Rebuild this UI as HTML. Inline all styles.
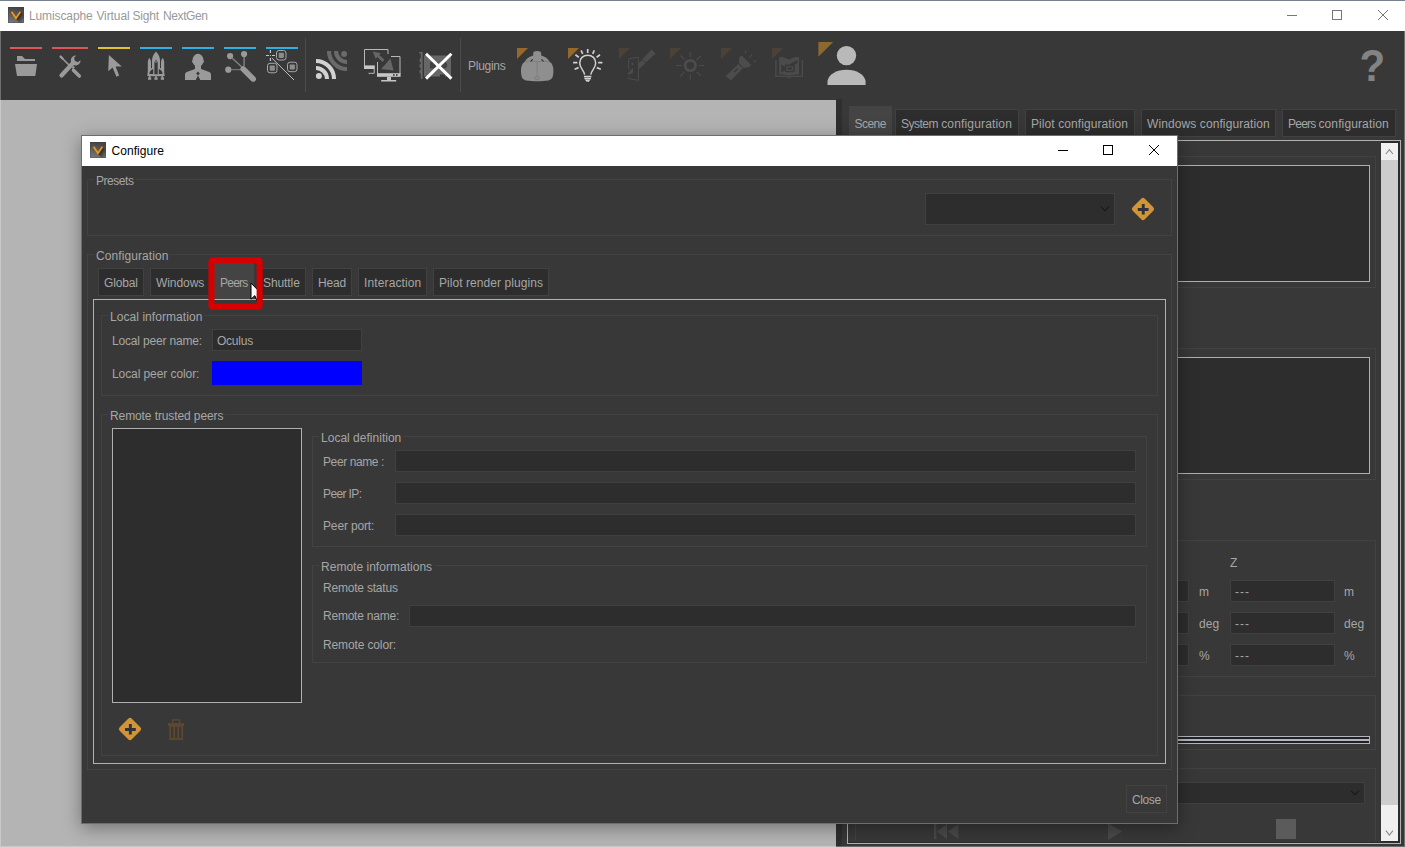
<!DOCTYPE html>
<html><head><meta charset="utf-8"><title>Lumiscaphe Virtual Sight NextGen</title>
<style>
*{box-sizing:border-box;margin:0;padding:0}
html,body{width:1405px;height:847px;overflow:hidden;background:#383838}
body{position:relative;font-family:"Liberation Sans",sans-serif;font-size:12px;line-height:14px;color:#a6a6a6}
.a{position:absolute}
.t{position:absolute;white-space:nowrap;height:14px;line-height:14px}
.gb{position:absolute;border:1px solid #424242}
.in{position:absolute;background:#2d2d2d;border:1px solid #404040}
.tab{position:absolute;background:#2d2d2d;border:1px solid #414141}
.lst{position:absolute;background:#2d2d2d;border:1px solid #b0b0b0}
.ln{position:absolute;height:3px}
svg{position:absolute;overflow:visible}
</style></head><body>
<!-- MAIN WINDOW TITLE -->
<div class="a" style="left:0;top:0;width:1405px;height:31px;background:#fff"></div>
<div class="a" style="left:0;top:0;width:1405px;height:1px;background:#76808f"></div>
<div class="t" id="w0" style="left:29px;top:9px;color:#999;letter-spacing:-0.112px">Lumiscaphe</div><div class="t" id="w1" style="left:96.4px;top:9px;color:#999;letter-spacing:-0.085px">Virtual</div><div class="t" id="w2" style="left:132.6px;top:9px;color:#999;letter-spacing:-0.232px">Sight</div><div class="t" id="w3" style="left:163px;top:9px;color:#999;letter-spacing:-0.394px">NextGen</div>
<!--TITLEICONS-->
<!-- TOOLBAR -->
<div class="a" style="left:0;top:31px;width:1405px;height:69px;background:#383838"></div>
<!--TB_START--><svg class="a" style="left:0;top:0" width="1405" height="100" viewBox="0 0 1405 100">
<!-- title icon -->
<defs><linearGradient id="ig" x1="0.2" y1="0" x2="0" y2="1"><stop offset="0" stop-color="#454545"/><stop offset="1" stop-color="#7a7a7a"/></linearGradient><linearGradient id="ih" x1="0" y1="0" x2="1" y2="1"><stop offset="0" stop-color="#1c1c1c"/><stop offset="0.45" stop-color="#333"/><stop offset="1" stop-color="#808080"/></linearGradient></defs>
<rect x="8" y="7" width="16" height="16" fill="url(#ig)"/>
<polygon points="15.6,18.6 20.6,11.6 24,15 24,23 20,23" fill="url(#ih)"/>
<rect x="8.5" y="7.5" width="15" height="15" fill="none" stroke="#3a3a3a" stroke-opacity="0.3" stroke-width="1"/>
<polyline points="11.6,11.7 16,18.3 20.4,11.7" fill="none" stroke="#f7960f" stroke-width="1.7" stroke-linejoin="miter"/>
<!-- window controls -->
<g stroke="#777" stroke-width="1" fill="none">
<line x1="1287" y1="15.5" x2="1297" y2="15.5"/>
<rect x="1332.5" y="10.5" width="9" height="9"/>
<path d="M1378,10 L1388,20 M1388,10 L1378,20"/>
</g>
<!-- colour bars -->
<rect x="10" y="47" width="32" height="2" fill="#e05656"/>
<rect x="52" y="47" width="36" height="2" fill="#e05656"/>
<rect x="98" y="47" width="32" height="2" fill="#e0c232"/>
<rect x="140" y="47" width="32" height="2" fill="#2eb1e2"/>
<rect x="182" y="47" width="32" height="2" fill="#2eb1e2"/>
<rect x="224" y="47" width="32" height="2" fill="#2eb1e2"/>
<rect x="266" y="47" width="32" height="2" fill="#2eb1e2"/>
<!-- separators -->
<rect x="305" y="38" width="1" height="54" fill="#4b4b4b"/>
<rect x="460" y="38" width="1" height="54" fill="#4b4b4b"/>
<!-- folder -->
<g fill="#9a9a9a">
<path d="M17,56 H22 L25,59 H35 V61 H17Z"/>
<path d="M15,64 H37 L35.3,76 H17Z"/>
</g>
<!-- wrench + screwdriver -->
<g stroke="#9a9a9a" fill="none" stroke-linecap="round">
<line x1="61.5" y1="75.5" x2="73" y2="63" stroke-width="4.2"/>
<line x1="61" y1="57" x2="70" y2="66" stroke-width="1.6"/>
<line x1="60.6" y1="56.6" x2="62.5" y2="58.5" stroke-width="2.4"/>
<line x1="73.5" y1="70.3" x2="79.3" y2="76" stroke-width="3.6"/>
</g>
<path d="M76.2,55.6 A4.9,4.9 0 1 0 80.6,60.2 L77.6,62.2 L74.6,60.6 L74.2,57.4Z" fill="#9a9a9a"/>
<path d="M71.5,67.5 l2.2,-1.6 l1.2,1.2 l-1.6,2.2z" fill="#9a9a9a"/>
<!-- cursor -->
<path d="M108.9,55 L108.2,71.2 L112.6,67.6 L116.4,76.8 L119.2,75.6 L115.6,66.6 L121.8,66.4Z" fill="#9a9a9a"/>
<!-- shuttle -->
<g fill="#9a9a9a">
<path d="M156,51.6 C153.2,54.5 152,57.5 152,61 V75 H160 V61 C160,57.5 158.8,54.5 156,51.6Z"/>
<path d="M149.4,58 C148.2,59.5 147.8,60.8 147.8,62.5 V75.5 H151 V62.5 C151,60.8 150.6,59.5 149.4,58Z"/>
<path d="M162.6,58 C161.4,59.5 161,60.8 161,62.5 V75.5 H164.2 V62.5 C164.2,60.8 163.8,59.5 162.6,58Z"/>
<path d="M147.6,75 C147.6,71 150,68.6 153,67.6 V76 H147.6Z M164.4,75 C164.4,71 162,68.6 159,67.6 V76 H164.4Z"/>
<rect x="147.6" y="74.6" width="16.8" height="1.6"/>
<rect x="148" y="77.4" width="3.2" height="2.4"/><rect x="154.4" y="77.4" width="3.2" height="2.4"/><rect x="160.8" y="77.4" width="3.2" height="2.4"/>
<rect x="149" y="76" width="1.4" height="2"/><rect x="155.3" y="76" width="1.4" height="2"/><rect x="161.6" y="76" width="1.4" height="2"/>
</g>
<path d="M154.4,74.2 V62.6 L156,59.6 L157.7,62.6 V74.2Z" fill="#383838"/>
<path d="M154.9,62.4 L156,60.8 L157.1,62.4Z" fill="#9a9a9a"/>
<path d="M149.4,74 C149.6,71.4 151,69.8 153.2,69 V74Z M162.6,74 C162.4,71.4 161,69.8 158.8,69 V74Z" fill="#383838"/>
<!-- person -->
<g fill="#9a9a9a">
<ellipse cx="198" cy="60.4" rx="5.5" ry="6.6"/>
<ellipse cx="198" cy="61.5" rx="6.2" ry="1.8"/>
<rect x="195" y="64" width="6" height="7"/>
<path d="M185,80 V74.5 C185,72.8 186,72.2 187.4,71.7 L195,69 H201 L208.6,71.7 C210,72.2 211,72.8 211,74.5 V80Z"/>
</g>
<path d="M198,71.4 L199.8,73.6 L198,75.6 L196.2,73.6Z M198,75.4 L200.4,80.2 H195.6Z" fill="#383838"/>
<!-- wand -->
<g fill="#9a9a9a"><circle cx="230.1" cy="56.1" r="3.1"/><circle cx="244.1" cy="54.1" r="3.1"/><circle cx="228.3" cy="69.7" r="3.1"/></g>
<g stroke="#808080" fill="none"><line x1="231.5" y1="57.5" x2="241.6" y2="66.8" stroke-width="1.5"/><line x1="244.1" y1="57" x2="244.1" y2="66" stroke-width="1.5"/><line x1="231" y1="69.7" x2="241" y2="69.7" stroke-width="1"/></g>
<line x1="243.2" y1="68.9" x2="253.2" y2="78.9" stroke="#9a9a9a" stroke-width="5.6" stroke-linecap="round"/>
<!-- selection -->
<g stroke="#c4c4c4" stroke-width="1.2" fill="none">
<path d="M266,55.5 H269 M272,55.5 H275 M270.4,50 V53 M270.4,58 V61" />
</g>
<rect x="269.9" y="55" width="1" height="1" fill="#c4c4c4"/>
<g stroke="#a8a8a8" stroke-width="1" fill="none">
<rect x="276.5" y="50.5" width="9.5" height="9.5" rx="2.5"/>
<rect x="267.5" y="63.3" width="9.5" height="9.5" rx="2.5"/>
<rect x="287.5" y="62.2" width="9.5" height="9.5" rx="2.5"/>
</g>
<g fill="#8c8c8c"><rect x="278.7" y="52.7" width="5.2" height="5.2" rx="0.8"/><rect x="269.7" y="65.5" width="5.2" height="5.2" rx="0.8"/><rect x="289.7" y="64.4" width="5.2" height="5.2" rx="0.8"/></g>
<line x1="271.8" y1="58" x2="294" y2="80" stroke="#d0d0d0" stroke-width="0.9"/>
<!-- rss -->
<g fill="none" stroke="#d2d2d2" stroke-width="4.1">
<path d="M316,68 A11,11 0 0 1 327,79"/><path d="M316,61 A18,18 0 0 1 334,79"/>
</g>
<circle cx="318.9" cy="76.1" r="3" fill="#d2d2d2"/>
<g fill="none" stroke="#6a6a6a" stroke-width="4.1">
<path d="M347,62 A11,11 0 0 1 336,51"/><path d="M347,69 A18,18 0 0 1 329,51"/>
</g>
<circle cx="344.1" cy="53.9" r="3" fill="#6a6a6a"/>
<!-- monitors -->
<g fill="none" stroke="#b8b8b8" stroke-width="1">
<path d="M364.5,66 V49.5 H388 V54"/>
<path d="M377.5,62 V74 M391,56.5 H400 V74"/>
<path d="M374.2,69 V73.3 H368.5"/>
</g>
<g fill="#c6c6c6"><rect x="364" y="65.4" width="10.8" height="3.6"/><rect x="377" y="73.2" width="23.6" height="3.6"/><rect x="387" y="76.8" width="4" height="3.4"/><rect x="381.2" y="80" width="15" height="1.5"/></g>
<g fill="#383838"><rect x="393" y="74.2" width="1.6" height="1.6"/><rect x="396" y="74.2" width="1.6" height="1.6"/></g>
<g fill="#666">
<path d="M372.8,51.4 L381,53.2 L379.2,55 L384.5,59.8 L382.4,62 L377.4,57 L375.6,58.8Z"/>
<path d="M381.2,69 L390.4,58.6 L393.6,70.6Z"/>
</g>
<!-- card + X -->
<g fill="#666">
<path d="M419.2,52 H422.6 V79 H420.8 V53.6 H419.2Z"/>
<path d="M419.6,58.6 h2 v3.4 h-2z M419.6,64.2 h2 v3.6 h-2z M419.6,70 h2 v3.4 h-2z"/>
<path d="M424,55.4 H451 V76.6 H445 V74.6 H440 V76.6 H424Z"/>
</g>
<g fill="#383838" opacity="0.75"><rect x="430" y="62" width="8" height="6.5"/><circle cx="444" cy="65.2" r="3.2"/></g>
<g stroke="#fff" stroke-width="3" fill="none"><line x1="426" y1="53.8" x2="451.4" y2="78.6"/><line x1="451.4" y1="53.8" x2="426" y2="78.6"/></g>
<!-- plugin triangles -->
<g fill="#96692a"><polygon points="517,48 528,48 517,59"/><polygon points="568,48 579,48 568,59"/></g>
<g fill="#4b4136"><polygon points="619,48 630,48 619,59"/><polygon points="670,48 681,48 670,59"/><polygon points="721,48 732,48 721,59"/><polygon points="772,48 783,48 772,59"/></g>
<polygon points="818.4,42 833.2,42 818.4,56.8" fill="#8b6931"/>
<!-- vr headset -->
<path d="M533.2,53.4 C533.2,51.6 534.6,50.9 537.1,50.9 C539.6,50.9 541.2,51.6 541.2,53.4 V55.4 C544.8,56.4 548.2,58.6 549.4,61.4 C552.6,63.6 553.6,67 553.4,71.6 C553.2,76.6 552.4,79.4 548.6,80.4 C542,81.4 532.4,81.4 525.8,80.4 C522,79.4 521.2,76.6 521,71.6 C520.8,67 521.8,63.6 525,61.4 C526.2,58.6 529.6,56.4 533.2,55.4Z" fill="#8f8f8f"/>
<g fill="none" stroke="#7a7a7a" stroke-width="0.8"><path d="M526,62 C530,60.2 533,61.6 534,61.6 H540.4 C541.4,61.6 544.4,60.2 548.4,62"/><path d="M537.1,62 V76.6"/><ellipse cx="537.1" cy="78" rx="2.6" ry="1.4"/></g>
<path d="M530.6,61.4 l2.2,-2 M543.6,61.4 l-2.2,-2" stroke="#333" stroke-width="1.2"/>
<!-- bulb -->
<g fill="none" stroke="#d0d0d0" stroke-width="1.5" stroke-linecap="butt">
<path d="M584.6,74.6 C584,70.4 579.7,68 579.7,62.9 C579.7,58.4 583.2,55.2 587.7,55.2 C592.2,55.2 595.7,58.4 595.7,62.9 C595.7,68 591.4,70.4 590.8,74.6"/>
<path d="M584,76.4 H591.4 M584.4,78.6 H591"/>
</g>
<path d="M584.8,79.6 H590.6 L588.8,81.8 H586.6Z" fill="#d0d0d0"/>
<g stroke="#d0d0d0" stroke-width="1.7" fill="none">
<path d="M587.7,48.9 V52.9 M573.1,62.7 H577.4 M598.2,62.7 H602.4"/>
<path d="M581.1,50.3 L582.7,53.9 M594.3,50.3 L592.7,53.9 M575.4,54.8 L578.8,57.2 M600,54.8 L596.6,57.2 M574.6,69.2 L578.6,67.6 M600.8,69.2 L596.8,67.6"/>
</g>
<!-- door / brush (dim) -->
<g fill="none" stroke="#4c4c4c" stroke-width="1"><path d="M628.7,69.5 V58.8 L638.4,57.2 V80.4 L628.7,78.6 V76.4"/></g>
<g fill="#4c4c4c">
<rect x="631.6" y="62.6" width="1.6" height="2.6"/>
<path d="M627.2,74 L633,67.8 V72.6 L630,74.4Z"/>
<path d="M639,62.8 L642.6,60 L645.4,63.2 L639,69.2Z"/>
<path d="M642.4,59.2 L651.6,49.6 L655.6,53.4 L645.8,62.6Z"/>
</g>
<!-- sun (dim) -->
<circle cx="690.3" cy="65.5" r="5.2" fill="none" stroke="#4c4c4c" stroke-width="2.8"/>
<g stroke="#4c4c4c" stroke-width="1.1" fill="none">
<path d="M690.3,52 V57 M690.3,74.5 V79.6 M676,65.5 H681.8 M698.8,65.5 H704.4"/>
<path d="M680.2,55.4 L684.4,59.4 M700.6,56.2 L696.4,60 M680.2,76.4 L684.2,72.4 M700.8,75.6 L696.6,72"/>
</g>
<!-- flashlight (dim) -->
<g fill="#4c4c4c">
<path d="M725.7,76.2 L738.3,64 L743,68.2 L730.8,80.6Z"/>
<path d="M739.3,57.2 L741.4,55.2 L751.2,64.8 L749.6,67 L743.8,67.9 L738.8,63Z"/>
<path d="M744.4,53.2 L745.6,50.2 L746.4,50.6 L745.8,53.4Z M748.8,57.4 L751.4,54.2 L752.6,54.6 L750,57.8Z M753.2,61.6 L756,60 L756.6,61 L754,62.2Z"/>
</g>
<path d="M734.3,72 L737.6,68.7" stroke="#383838" stroke-width="1.4"/>
<!-- book (dim) -->
<g fill="none" stroke="#4b4b4b" stroke-width="1.4"><path d="M775.9,60 V76.4 H786.6 C788,76.4 788.6,77.6 789.2,77.6 C789.8,77.6 790.4,76.4 791.8,76.4 H802.4 V60"/></g>
<path d="M779.1,57 C783,56.6 786.6,57.6 789.2,59.8 C791.8,57.6 795.4,56.6 799,57 V74.6 C795.4,74.2 791.8,74.6 789.2,76 C786.6,74.6 783,74.2 779.1,74.6Z" fill="#4b4b4b"/>
<g fill="#383838"><path d="M781.2,64.4 L784.6,66.6 V70.4 L781.2,72.6Z"/><rect x="784.6" y="64.6" width="10.2" height="7.6" rx="1.6"/><path d="M789,64.6 L797,60.2 L797.8,62.8 L794,65Z"/></g>
<rect x="786.8" y="66.8" width="5.8" height="3.4" fill="none" stroke="#4b4b4b" stroke-width="1.2"/>
<!-- big person -->
<circle cx="846.5" cy="55.6" r="9.7" fill="#b9b9b9"/>
<path d="M827.5,85 V81 C828.6,74.4 836.4,69.7 846.5,69.7 C856.6,69.7 864.4,74.4 865.6,81 V85Z" fill="#b9b9b9"/>
</svg>
<div class="t" id="plg" style="left:468px;top:59px;color:#a6a6a6;letter-spacing:-0.266px">Plugins</div>
<div class="a" id="q" style="left:1359px;top:42px;width:26px;height:48px;line-height:48px;font-size:44px;font-weight:bold;color:#838383;text-align:center;transform:scaleX(0.955)">?</div>
<!--TB_END-->
<!-- CANVAS -->
<div class="a" style="left:0;top:100px;width:836px;height:747px;background:#b4b4b4"></div>
<div class="a" style="left:836px;top:99px;width:6px;height:748px;background:#2f2f2f"></div>
<!--RP_START--><!-- right panel tabs -->
<div class="a" style="left:849px;top:106px;width:43px;height:34px;background:#444"></div>
<div class="t" id="rt0" style="left:854.5px;top:117px;letter-spacing:-0.526px">Scene</div>
<div class="tab" style="left:895px;top:109px;width:124px;height:28px"></div>
<div class="t" id="rt1a" style="left:901px;top:117px;letter-spacing:-0.503px">System</div><div class="t" id="rt1b" style="left:941.2px;top:117px;letter-spacing:0.160px">configuration</div>
<div class="tab" style="left:1025px;top:109px;width:110px;height:28px"></div>
<div class="t" id="rt2" style="left:1031px;top:117px;letter-spacing:0.085px">Pilot configuration</div>
<div class="tab" style="left:1141px;top:109px;width:135px;height:28px"></div>
<div class="t" id="rt3" style="left:1147px;top:117px;letter-spacing:0.098px">Windows configuration</div>
<div class="tab" style="left:1282px;top:109px;width:114px;height:28px"></div>
<div class="t" id="rt4a" style="left:1288px;top:117px;letter-spacing:-0.772px">Peers</div><div class="t" id="rt4b" style="left:1318.4px;top:117px;letter-spacing:0.129px">configuration</div>
<!-- frame -->
<div class="a" style="left:847px;top:140px;width:554px;height:704px;border:1px solid #b2b2b2;background:#383838"></div>
<div class="a" style="left:1381px;top:141px;width:19px;height:702px;background:#2b2b2b"></div>
<!-- scrollbar -->
<div class="a" style="left:1381px;top:143px;width:17px;height:698px;background:#cdcdcd"></div>
<div class="a" style="left:1381px;top:143px;width:17px;height:17px;background:#f0f0f0"></div>
<div class="a" style="left:1381px;top:805px;width:17px;height:36px;background:#f0f0f0"></div>
<svg class="a" style="left:1381px;top:143px" width="17" height="698" viewBox="0 0 17 698"><g fill="none" stroke="#8a8a8a" stroke-width="1.1"><path d="M4.9,11 L8.4,6.6 L11.9,11"/><path d="M4.9,687.6 L8.4,692 L11.9,687.6"/></g></svg>
<!-- group 1 -->
<div class="gb" style="left:855px;top:156px;width:521px;height:132px"></div>
<div class="lst" style="left:861px;top:165px;width:509px;height:117px"></div>
<!-- group 2 -->
<div class="gb" style="left:855px;top:348px;width:521px;height:132px"></div>
<div class="lst" style="left:861px;top:357px;width:509px;height:117px"></div>
<!-- group 3 -->
<div class="gb" style="left:855px;top:540px;width:521px;height:137px"></div>
<div class="t" id="rz" style="left:1230px;top:556px;letter-spacing:-0.344px">Z</div>
<div class="in" style="left:1084px;top:580px;width:105px;height:22px"></div>
<div class="in" style="left:1084px;top:612px;width:105px;height:22px"></div>
<div class="in" style="left:1084px;top:644px;width:105px;height:22px"></div>
<div class="in" style="left:1230px;top:580px;width:105px;height:22px"></div>
<div class="in" style="left:1230px;top:612px;width:105px;height:22px"></div>
<div class="in" style="left:1230px;top:644px;width:105px;height:22px"></div>
<div class="t" style="left:1235px;top:585px;letter-spacing:1px">---</div>
<div class="t" style="left:1235px;top:617px;letter-spacing:1px">---</div>
<div class="t" style="left:1235px;top:649px;letter-spacing:1px">---</div>
<div class="t" id="rm1" style="left:1199px;top:585px;letter-spacing:0.000px">m</div>
<div class="t" id="rd1" style="left:1199px;top:617px;letter-spacing:0.056px">deg</div>
<div class="t" id="rp1" style="left:1199px;top:649px;letter-spacing:-0.972px">%</div>
<div class="t" id="rm2" style="left:1344px;top:585px;letter-spacing:0.000px">m</div>
<div class="t" id="rd2" style="left:1344px;top:617px;letter-spacing:0.056px">deg</div>
<div class="t" id="rp2" style="left:1344px;top:649px;letter-spacing:-0.972px">%</div>
<!-- group 4 -->
<div class="gb" style="left:855px;top:695px;width:521px;height:55px"></div>
<div class="a" style="left:861px;top:736px;width:509px;height:4px;background:#222;border:1px solid #b4b6be"></div>
<div class="a" style="left:861px;top:740px;width:509px;height:4px;background:#222;border:1px solid #b4b6be"></div>
<!-- group 5 -->
<div class="gb" style="left:855px;top:768px;width:521px;height:73px;border-bottom:none"></div>
<div class="in" style="left:861px;top:782px;width:504px;height:22px"></div>
<svg class="a" style="left:1350px;top:789px" width="10" height="8" viewBox="0 0 10 8"><path d="M0.8,1.6 L5,5.8 L9.2,1.6" fill="none" stroke="#1c1c1c" stroke-width="1.3"/></svg>
<div class="a" style="left:1276px;top:819px;width:20px;height:20px;background:#5b5b5b"></div>
<svg class="a" style="left:930px;top:820px" width="200" height="20" viewBox="930 820 200 20"><g fill="#4a4a4a"><path d="M934,824 h2.4 v15 h-2.4z M947,824 v15 l-10.4,-7.5z M958.4,824 v15 l-10.4,-7.5z"/><path d="M1108,823 L1122.4,831.5 L1108,840Z"/></g></svg>
<!-- cover overflow below frame -->
<div class="a" style="left:848px;top:842px;width:552px;height:1px;background:#2c2c2c"></div>
<div class="a" style="left:841px;top:844px;width:562px;height:2px;background:#383838"></div>
<!--RP_END-->
<!--DG_START--><div class="a" id="dlg" style="left:81px;top:135px;width:1097px;height:689px;background:#383838;border:1px solid #1a83d8;box-shadow:0 4px 17px 0 rgba(0,0,0,0.36)"></div>
<div class="a" style="left:82px;top:136px;width:1095px;height:30px;background:#fff"></div>
<svg class="a" style="left:82px;top:136px" width="1095" height="30" viewBox="82 136 1095 30">
<rect x="90" y="142" width="16" height="16" fill="url(#ig)"/>
<polygon points="97.6,153.6 102.6,146.6 106,150 106,158 102,158" fill="url(#ih)"/>
<rect x="90.5" y="142.5" width="15" height="15" fill="none" stroke="#3a3a3a" stroke-opacity="0.3" stroke-width="1"/>
<polyline points="93.6,146.7 98,153.3 102.4,146.7" fill="none" stroke="#f7960f" stroke-width="1.7"/>
<g stroke="#000" stroke-width="1" fill="none">
<line x1="1058" y1="150.5" x2="1068" y2="150.5"/>
<rect x="1103.5" y="145.5" width="9" height="9"/>
<path d="M1149,145 L1159,155 M1159,145 L1149,155"/>
</g></svg>
<div class="t" id="dt" style="left:111.5px;top:144px;color:#000;letter-spacing:0.041px">Configure</div>
<!-- presets -->
<div class="gb" style="left:87px;top:179px;width:1085px;height:57px"></div>
<div class="t" id="d0" style="left:94px;top:174px;background:#383838;padding:0 2px;letter-spacing:-0.455px">Presets</div>
<div class="in" style="left:925px;top:193px;width:190px;height:32px"></div>
<svg class="a" style="left:1100px;top:205px" width="10" height="8" viewBox="0 0 10 8"><path d="M0.8,1.6 L5,5.8 L9.2,1.6" fill="none" stroke="#1c1c1c" stroke-width="1.3"/></svg>
<svg class="a" style="left:1131px;top:197px" width="24" height="24" viewBox="-12 -12 24 24"><rect x="-8.6" y="-8.6" width="17.2" height="17.2" rx="2.6" transform="rotate(45)" fill="#d29535"/><path d="M-5.2,-0.9 H5.6 V1.9 H-5.2Z M-1.2,-5 H1.7 V5.6 H-1.2Z" fill="#2d323c"/></svg>
<!-- configuration -->
<div class="gb" style="left:87px;top:254px;width:1085px;height:516px"></div>
<div class="t" id="d1" style="left:94px;top:249px;background:#383838;padding:0 2px;letter-spacing:0.085px">Configuration</div>
<div class="tab" style="left:98px;top:268px;width:46px;height:28px"></div>
<div class="t" id="t0" style="left:104px;top:276px;letter-spacing:-0.148px">Global</div>
<div class="tab" style="left:150px;top:268px;width:61px;height:28px"></div>
<div class="t" id="t1" style="left:156px;top:276px;letter-spacing:-0.070px">Windows</div>
<div class="a" style="left:214px;top:263px;width:40px;height:36px;background:#444"></div>
<div class="t" id="t2" style="left:220px;top:276px;letter-spacing:-0.772px">Peers</div>
<div class="tab" style="left:257px;top:268px;width:49px;height:28px"></div>
<div class="t" id="t3" style="left:263px;top:276px;letter-spacing:-0.080px">Shuttle</div>
<div class="tab" style="left:312px;top:268px;width:40px;height:28px"></div>
<div class="t" id="t4" style="left:318px;top:276px;letter-spacing:-0.197px">Head</div>
<div class="tab" style="left:358px;top:268px;width:69px;height:28px"></div>
<div class="t" id="t5" style="left:364px;top:276px;letter-spacing:0.123px">Interaction</div>
<div class="tab" style="left:433px;top:268px;width:116px;height:28px"></div>
<div class="t" id="t6" style="left:439px;top:276px;letter-spacing:0.063px">Pilot render plugins</div>
<!-- pane -->
<div class="a" style="left:93px;top:299px;width:1073px;height:465px;border:1px solid #b2b2b2"></div>
<!-- local information -->
<div class="gb" style="left:101px;top:315px;width:1057px;height:81px"></div>
<div class="t" id="d2" style="left:108px;top:310px;background:#383838;padding:0 2px;letter-spacing:0.059px">Local information</div>
<div class="t" id="d3" style="left:112px;top:334px;letter-spacing:-0.171px">Local peer name:</div>
<div class="in" style="left:212px;top:329px;width:150px;height:22px"></div>
<div class="t" id="d4" style="left:217px;top:334px;letter-spacing:-0.243px">Oculus</div>
<div class="t" id="d5" style="left:112px;top:367px;letter-spacing:-0.083px">Local peer color:</div>
<div class="a" style="left:212px;top:361px;width:150px;height:24px;background:#0000ff"></div>
<!-- remote trusted peers -->
<div class="gb" style="left:101px;top:414px;width:1057px;height:342px"></div>
<div class="t" id="d6" style="left:108px;top:409px;background:#383838;padding:0 2px;letter-spacing:-0.100px">Remote trusted peers</div>
<div class="lst" style="left:112px;top:428px;width:190px;height:275px"></div>
<div class="gb" style="left:312px;top:436px;width:835px;height:111px"></div>
<div class="t" id="d7" style="left:319px;top:431px;background:#383838;padding:0 2px;letter-spacing:0.015px">Local definition</div>
<div class="t" id="d8" style="left:323px;top:455px;letter-spacing:-0.398px">Peer name :</div>
<div class="in" style="left:395px;top:450px;width:741px;height:22px"></div>
<div class="t" id="d9" style="left:323px;top:487px;letter-spacing:-0.620px">Peer IP:</div>
<div class="in" style="left:395px;top:482px;width:741px;height:22px"></div>
<div class="t" id="d10" style="left:323px;top:519px;letter-spacing:-0.150px">Peer port:</div>
<div class="in" style="left:395px;top:514px;width:741px;height:22px"></div>
<div class="gb" style="left:312px;top:565px;width:835px;height:98px"></div>
<div class="t" id="d11" style="left:319px;top:560px;background:#383838;padding:0 2px;letter-spacing:0.020px">Remote informations</div>
<div class="t" id="d12" style="left:323px;top:581px;letter-spacing:-0.206px">Remote status</div>
<div class="t" id="d13" style="left:323px;top:609px;letter-spacing:-0.225px">Remote name:</div>
<div class="in" style="left:409px;top:605px;width:727px;height:22px"></div>
<div class="t" id="d14" style="left:323px;top:638px;letter-spacing:-0.131px">Remote color:</div>
<!-- add / trash -->
<svg class="a" style="left:118px;top:717px" width="24" height="24" viewBox="-12 -12 24 24"><rect x="-8.6" y="-8.6" width="17.2" height="17.2" rx="2.6" transform="rotate(45)" fill="#d29535"/><path d="M-5,-1 H5.8 V1.9 H-5Z M-1.1,-5 H1.8 V5.6 H-1.1Z" fill="#2d323c"/></svg>
<svg class="a" style="left:166px;top:718px" width="20" height="23" viewBox="166 718 20 23"><g fill="none" stroke="#5c4831"><rect x="172.7" y="719.9" width="7" height="4" stroke-width="1.4"/><rect x="170.2" y="726" width="12" height="13.1" stroke-width="1.8"/><path d="M174.2,726 V739 M178.2,726 V739" stroke-width="1.8"/></g><rect x="168" y="723.1" width="16.2" height="3" fill="#5c4831"/></svg>
<!-- close -->
<div class="gb" style="left:1126px;top:785px;width:41px;height:28px"></div>
<div class="t" id="d15" style="left:1132px;top:793px;letter-spacing:-0.398px">Close</div>
<!-- cursor + highlight -->
<svg class="a" style="left:250px;top:282px" width="14" height="22" viewBox="-1 -1 14 22"><path d="M0,0 V16.2 L3.8,12.6 L6.6,19 L9,18 L6.3,11.8 H11.4Z" fill="#fff" stroke="#000" stroke-width="1" stroke-linejoin="miter"/></svg>
<svg class="a" style="left:200px;top:250px" width="70" height="66" viewBox="200 250 70 66"><rect x="211.45" y="260.3" width="48.2" height="46.4" rx="1.3" fill="none" stroke="#d60000" stroke-width="6.1"/></svg>
<!--DG_END-->
<!-- window edge -->
<div class="a" style="left:0;top:1px;width:1405px;height:846px;border:1px solid rgba(255,255,255,0.28);border-top:none;pointer-events:none"></div>
</body></html>
